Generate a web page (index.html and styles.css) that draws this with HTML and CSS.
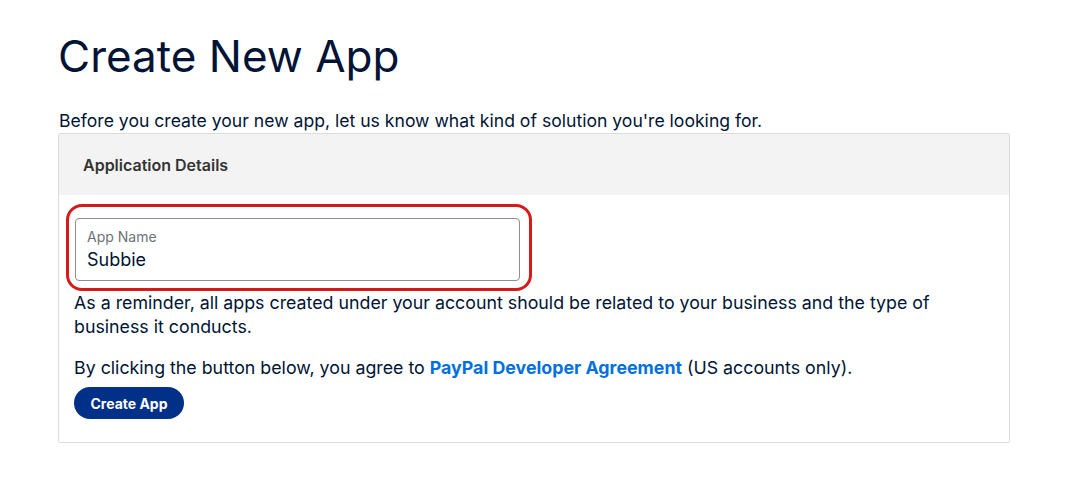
FILE: index.html
```html
<!DOCTYPE html>
<html>
<head>
<meta charset="utf-8">
<link rel="stylesheet" href="styles.css">
</head>
<body>
<main class="page">
  <h1 class="title">Create New App</h1>
  <p class="intro">Before you create your new app, let us know what kind of solution you're looking for.</p>
  <section class="card">
    <header class="card-head">Application Details</header>
    <div class="card-body">
      <div class="highlight">
        <div class="field">
          <span class="field-label">App Name</span>
          <span class="field-value">Subbie</span>
        </div>
      </div>
      <p class="note">As a reminder, all apps created under your account should be related to your business and the type of business it conducts.</p>
      <p class="agree">By clicking the button below, you agree to <a class="link" href="#">PayPal Developer Agreement</a> (US accounts only).</p>
      <button class="btn">Create App</button>
    </div>
  </section>
</main>
</body>
</html>
```

FILE: styles.css
```css
html, body {
  margin: 0;
  padding: 0;
  background: #ffffff;
}
body {
  font-family: Inter, "Liberation Sans", Arial, sans-serif;
  color: #001435;
}
.page {
  padding: 26px 0 0 58px;
  width: 952px;
}
.title {
  margin: 0;
  font-size: 44px;
  font-weight: 400;
  line-height: 60px;
  color: #001435;
}
.intro {
  margin: 23px 0 0 1px;
  font-size: 17.6px;
  line-height: 24px;
}
.card {
  margin-top: 0;
  border: 1px solid #dcdcdc;
  border-radius: 2px;
}
.card-head {
  background: #f3f3f3;
  height: 61px;
  display: flex;
  align-items: center;
  padding-left: 24px;
  font-size: 16px;
  font-weight: 600;
  color: #333333;
}
.card-body {
  padding: 9px 16px 23px 15px;
}
.highlight {
  width: 466px;
  margin-left: -8px;
  padding: 11px 9px 7px 6px;
  border: 3px solid #d61a1a;
  border-radius: 16px;
  box-sizing: border-box;
}
.field {
  border: 1px solid #8f8f8f;
  border-radius: 4px;
  height: 63px;
  box-sizing: border-box;
  padding: 9px 11px 0;
  display: flex;
  flex-direction: column;
}
.field-label {
  font-size: 14px;
  line-height: 18px;
  color: #6c7378;
}
.field-value {
  margin-top: 2px;
  font-size: 18px;
  line-height: 24px;
  color: #001435;
}
.note {
  margin: 0;
  font-size: 17.8px;
  line-height: 24px;
}
.agree {
  margin: 17px 0 0;
  font-size: 17.8px;
  line-height: 24px;
}
.link {
  color: #0070e0;
  font-weight: 700;
  text-decoration: none;
}
.btn {
  margin-top: 7px;
  display: block;
  background: #003087;
  color: #ffffff;
  border: none;
  border-radius: 16px;
  height: 32px;
  width: 110px;
  font-family: Inter, "Liberation Sans", Arial, sans-serif;
  font-size: 14px;
  font-weight: 700;
  padding: 0;
}
```
